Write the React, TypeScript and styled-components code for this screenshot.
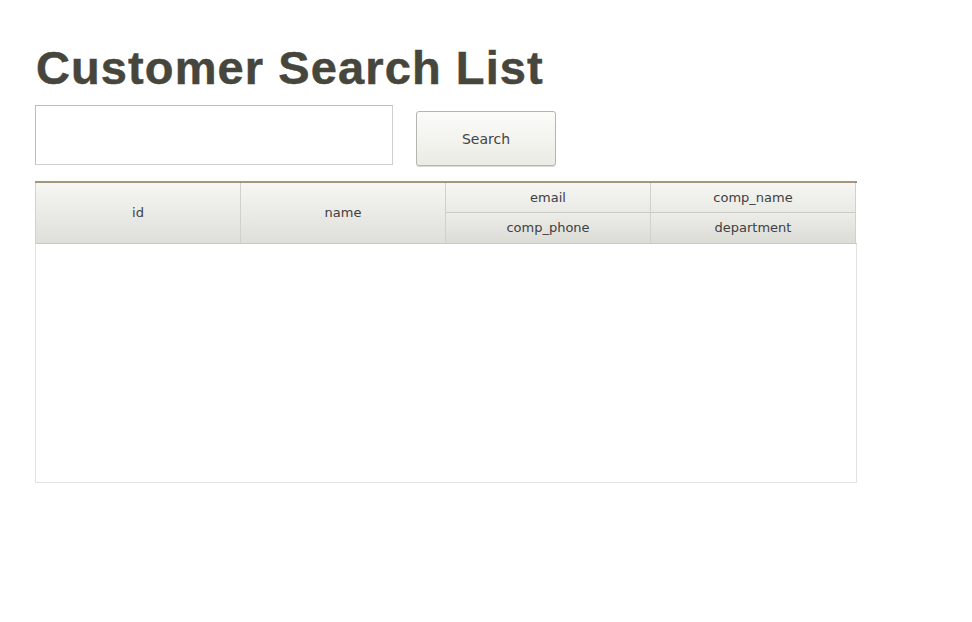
import React from "react";
import styled, { createGlobalStyle } from "styled-components";

const GlobalStyle = createGlobalStyle`
  html, body { margin: 0; padding: 0; background: #ffffff; }
  body { font-family: "Liberation Sans", Arial, sans-serif; }
`;

const Page = styled.div`
  padding: 39px 0 0 35px;
  width: 822px;
`;

const Title = styled.h1`
  margin: 0 0 0 1px;
  font-family: "Liberation Sans", Arial, sans-serif;
  font-weight: bold;
  font-size: 47px;
  line-height: 57px;
  letter-spacing: 1.1px;
  color: #46463c;
  -webkit-text-stroke: 0.5px #46463c;
`;

const SearchBar = styled.div`
  display: flex;
  align-items: flex-start;
  gap: 23px;
  margin-top: 9px;
`;

const SearchInput = styled.input`
  box-sizing: border-box;
  width: 358px;
  height: 60px;
  margin: 0;
  border: 1px solid #cfcfcf;
  border-top-color: #bdbdbd;
  border-left-color: #bdbdbd;
  background: #fff;
  outline: none;
`;

const SearchButton = styled.button`
  box-sizing: border-box;
  width: 140px;
  height: 55px;
  margin-top: 6px;
  border: 1px solid #b4b4b0;
  border-radius: 3px;
  background: linear-gradient(#fbfbf9, #ebebe5);
  box-shadow: 0 1px 0 #d9d9d6;
  font-family: "DejaVu Sans", sans-serif;
  font-size: 14px;
  color: #444;
`;

const Grid = styled.div`
  margin-top: 15px;
  width: 822px;
  border-top: 2px solid #a3967a;
`;

const Head = styled.div`
  display: grid;
  grid-template-columns: 205px 205px 205px 205px;
  grid-template-rows: 30px 30px;
  border-left: 1px solid #d2d2cf;
  border-bottom: 1px solid #c8c8c4;
`;

const HeadCell = styled.div<{ $span?: boolean; $top?: boolean }>`
  box-sizing: border-box;
  display: flex;
  align-items: center;
  justify-content: center;
  grid-row: ${(p) => (p.$span ? "1 / span 2" : "auto")};
  border-right: 1px solid #d0d0cc;
  border-bottom: ${(p) => (p.$top ? "1px solid #cacac6" : "none")};
  background: ${(p) =>
    p.$span
      ? "linear-gradient(#f6f6f3, #dededa)"
      : p.$top
      ? "linear-gradient(#f6f6f3, #e9e9e5)"
      : "linear-gradient(#ececE8, #dcdcd7)"};
  font-family: "DejaVu Sans", sans-serif;
  font-size: 13px;
  color: #404040;
  padding-bottom: 1px;
`;

const Body = styled.div`
  height: 238px;
  border: 1px solid #e2e2e2;
  border-top: none;
  background: #fff;
`;

export default function App() {
  return (
    <>
      <GlobalStyle />
      <Page>
        <Title>Customer Search List</Title>
        <SearchBar>
          <SearchInput type="text" />
          <SearchButton>Search</SearchButton>
        </SearchBar>
        <Grid>
          <Head>
            <HeadCell $span>id</HeadCell>
            <HeadCell $span>name</HeadCell>
            <HeadCell $top>email</HeadCell>
            <HeadCell $top>comp_name</HeadCell>
            <HeadCell>comp_phone</HeadCell>
            <HeadCell>department</HeadCell>
          </Head>
          <Body />
        </Grid>
      </Page>
    </>
  );
}
